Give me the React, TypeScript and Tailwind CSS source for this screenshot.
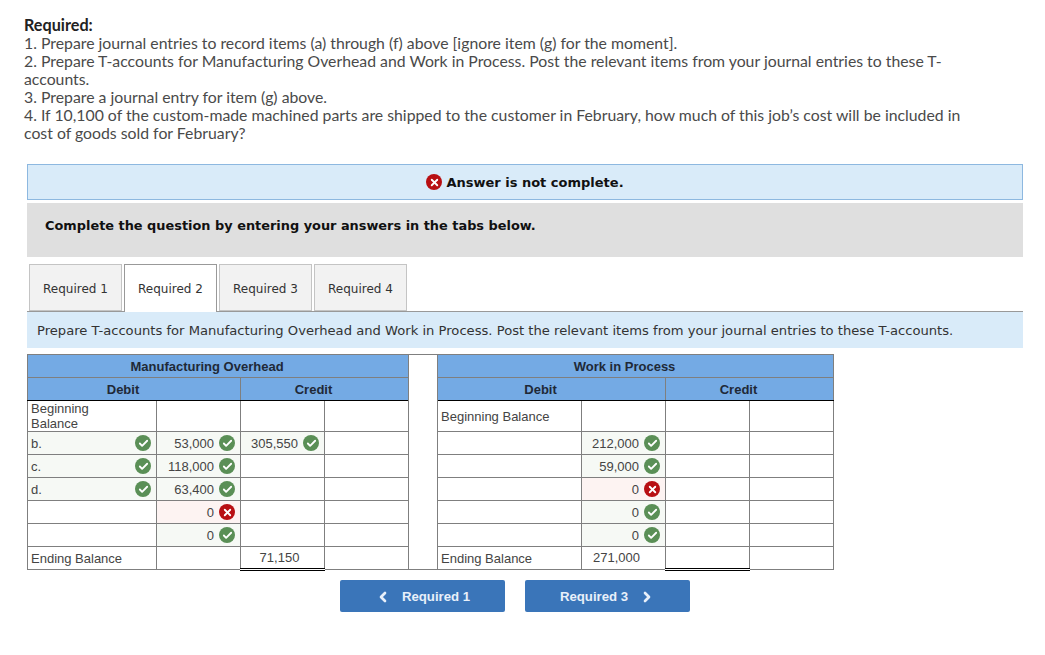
import { Check, X, ChevronLeft, ChevronRight } from 'lucide-react'

type Mark = 'ok' | 'bad' | null

function StatusIcon({ mark, size = 16 }: { mark: Mark; size?: number }) {
  if (!mark) return null
  return (
    <span
      className={`inline-flex shrink-0 items-center justify-center rounded-full text-white ${mark === 'ok' ? 'bg-[#5a8f56]' : 'bg-[#b80f13]'}`}
      style={{ width: size, height: size }}
    >
      {mark === 'ok' ? <Check size={size - 5} strokeWidth={4} /> : <X size={size - 5} strokeWidth={4} />}
    </span>
  )
}

type Row = {
  label?: string
  labelMark?: Mark
  amount?: string
  amountMark?: Mark
  credit?: string
  creditMark?: Mark
  h: string
  ending?: boolean
  narrow?: boolean
}

const overhead: Row[] = [
  { label: 'Beginning Balance', h: 'h-[31px]', narrow: true },
  { label: 'b.', labelMark: 'ok', amount: '53,000', amountMark: 'ok', credit: '305,550', creditMark: 'ok', h: 'h-[23px]' },
  { label: 'c.', labelMark: 'ok', amount: '118,000', amountMark: 'ok', h: 'h-[23px]' },
  { label: 'd.', labelMark: 'ok', amount: '63,400', amountMark: 'ok', h: 'h-[23px]' },
  { amount: '0', amountMark: 'bad', h: 'h-[23px]' },
  { amount: '0', amountMark: 'ok', h: 'h-[23px]' },
  { label: 'Ending Balance', credit: '71,150', h: 'h-[23px]', ending: true },
]

const wip: Row[] = [
  { label: 'Beginning Balance', h: 'h-[31px]' },
  { amount: '212,000', amountMark: 'ok', h: 'h-[23px]' },
  { amount: '59,000', amountMark: 'ok', h: 'h-[23px]' },
  { amount: '0', amountMark: 'bad', h: 'h-[23px]' },
  { amount: '0', amountMark: 'ok', h: 'h-[23px]' },
  { amount: '0', amountMark: 'ok', h: 'h-[23px]' },
  { label: 'Ending Balance', amount: '271,000', h: 'h-[23px]', ending: true },
]

const tint = (m?: Mark) => (m === 'ok' ? 'bg-[#f6f9f5]' : m === 'bad' ? 'bg-[#fdf3f2]' : 'bg-white')

function AccountRows({ row, index }: { row: Row; index: number }) {
  const topBorder = index === 0 || row.ending ? 'border-t-black' : 'border-t-[#7f7f7f]'
  const cell = `border border-[#7f7f7f] ${topBorder} p-0 align-middle`
  return (
    <>
      <td className={`${cell} ${tint(row.labelMark)}`}>
        <div className="flex items-center justify-between pr-[5px] pl-[3px] leading-[15px]">
          <span className={row.narrow ? 'w-[70px]' : ''}>{row.label}</span>
          <StatusIcon mark={row.labelMark} />
        </div>
      </td>
      <td className={`${cell} ${tint(row.amountMark)}`}>
        <div className="flex items-center justify-end gap-[5px] pr-[5px]">
          <span className={row.amountMark ? 'pt-px' : 'pr-[20px]'}>{row.amount}</span>
          <StatusIcon mark={row.amountMark} />
        </div>
      </td>
      <td className={`${cell} ${index === 0 || row.ending ? 'border-l-black' : ''} ${row.ending ? 'border-b-[3px] border-b-black [border-bottom-style:double]' : ''} ${tint(row.creditMark)}`}>
        <div className={`flex items-center gap-[5px] ${row.creditMark ? 'justify-end pr-[5px]' : 'justify-center pr-[6px]'}`}>
          <span className={row.creditMark ? 'pt-px' : ''}>{row.credit}</span>
          <StatusIcon mark={row.creditMark} />
        </div>
      </td>
      <td className={`${cell} bg-white`} />
    </>
  )
}

function TAccounts() {
  const title = 'border border-[#7f7f7f] bg-[#74aae4] p-0 pt-px pr-[22px] font-bold text-[#1f2937]'
  const head = 'border border-[#7f7f7f] border-b-black bg-[#74aae4] p-0 pt-px pr-[22px] font-bold text-[#1f2937]'
  return (
    <table className="ml-[27px] w-[806px] table-fixed border-collapse font-['Liberation_Sans',sans-serif] text-[13px] text-[#444]">
      <colgroup>
        <col className="w-[129px]" />
        <col className="w-[84px]" />
        <col className="w-[84px]" />
        <col className="w-[84px]" />
        <col className="w-[29px]" />
        <col className="w-[144px]" />
        <col className="w-[84px]" />
        <col className="w-[84px]" />
        <col className="w-[84px]" />
      </colgroup>
      <tbody>
        <tr className="h-[23px]">
          <th colSpan={4} className={title}>Manufacturing Overhead</th>
          <td rowSpan={9} className="border border-[#7f7f7f] bg-white p-0" />
          <th colSpan={4} className={title}>Work in Process</th>
        </tr>
        <tr className="h-[23px]">
          <th colSpan={2} className={head}>Debit</th>
          <th colSpan={2} className={head}>Credit</th>
          <th colSpan={2} className={head}>Debit</th>
          <th colSpan={2} className={head}>Credit</th>
        </tr>
        {overhead.map((row, i) => (
          <tr key={i} className={row.h}>
            <AccountRows row={row} index={i} />
            <AccountRows row={wip[i]} index={i} />
          </tr>
        ))}
      </tbody>
    </table>
  )
}

export default function App() {
  const tabs = ['Required 1', 'Required 2', 'Required 3', 'Required 4']
  return (
    <div className="h-[655px] w-[1045px] overflow-hidden bg-white">
      <div className="px-6 pt-[16px] font-['Lato',sans-serif] text-[15.8px] leading-[18px] text-[#4a4a4a]">
        <p className="text-[16.2px] font-bold text-[#222]">Required:</p>
        <p>1. Prepare journal entries to record items (a) through (f) above [ignore item (g) for the moment].</p>
        <p className="w-[940px]">2. Prepare T-accounts for Manufacturing Overhead and Work in Process. Post the relevant items from your journal entries to these T-accounts.</p>
        <p>3. Prepare a journal entry for item (g) above.</p>
        <p className="w-[960px]">4. If 10,100 of the custom-made machined parts are shipped to the customer in February, how much of this job’s cost will be included in cost of goods sold for February?</p>
      </div>

      <div className="ml-[27px] mt-[22px] w-[996px] font-['DejaVu_Sans',sans-serif]">
        <div className="flex h-[36px] items-center justify-center gap-[4px] border border-[#8db8e0] bg-[#d9ebf9] text-[13px] font-bold text-[#111]">
          <StatusIcon mark="bad" />
          <span className="pt-px">Answer is not complete.</span>
        </div>
        <div className="mt-[3px] flex h-[54px] items-center bg-[#dfdfdf] pb-[8px] pl-[18px] text-[12.9px] font-bold text-[#111]">
          Complete the question by entering your answers in the tabs below.
        </div>

        <div className="mt-[7px] flex gap-[2px] pl-[2px] text-[12px] text-[#333]">
          {tabs.map((t, i) => (
            <div
              key={t}
              className={i === 1
                ? 'z-10 -mb-px flex h-[48px] w-[93px] items-center justify-center border border-b-0 border-[#999] bg-white pt-px'
                : 'flex h-[47px] w-[93px] items-center justify-center border border-[#c4c4c4] bg-[#f2f2f2] pt-[2px]'}
            >
              {t}
            </div>
          ))}
        </div>
        <div className="flex h-[37px] items-center border-t border-[#999] bg-[#d9ebf9] pl-[10px] pt-px text-[13.13px] text-[#333]">
          Prepare T-accounts for Manufacturing Overhead and Work in Process. Post the relevant items from your journal entries to these T-accounts.
        </div>
      </div>

      <div className="mt-[6px]">
        <TAccounts />
      </div>

      <div className="ml-[340px] mt-[9px] flex gap-[20px] font-['Liberation_Sans',sans-serif] text-[13.2px] font-bold text-[#e8f0fa]">
        <button className="flex h-[32px] w-[165px] items-center justify-center gap-[11px] rounded-[2px] bg-[#3a75b9] pt-px">
          <ChevronLeft size={16} strokeWidth={4} />
          Required 1
        </button>
        <button className="flex h-[32px] w-[165px] items-center justify-center gap-[11px] rounded-[2px] bg-[#3a75b9] pt-px">
          Required 3
          <ChevronRight size={16} strokeWidth={4} />
        </button>
      </div>
    </div>
  )
}
